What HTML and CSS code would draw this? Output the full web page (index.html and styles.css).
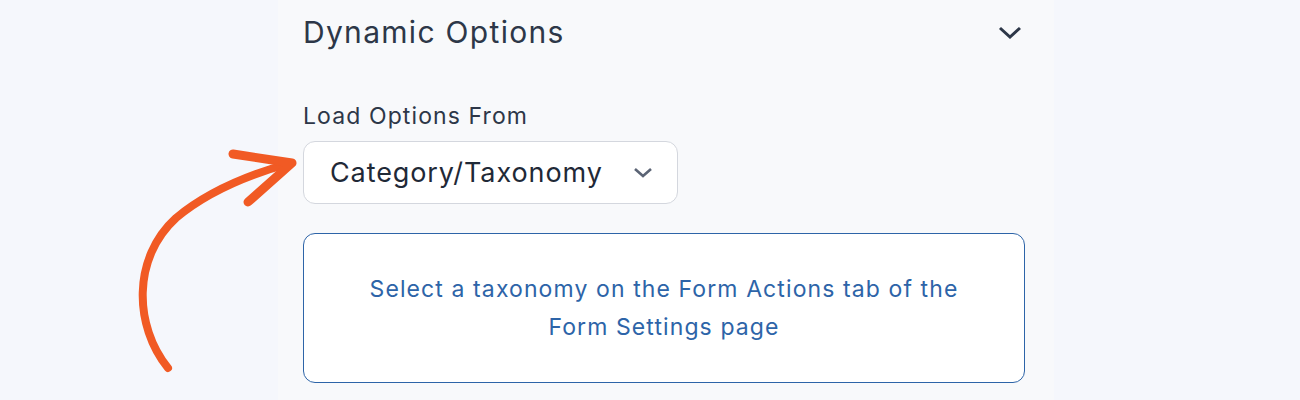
FILE: index.html
```html
<!DOCTYPE html>
<html>
<head>
<meta charset="utf-8">
<link rel="stylesheet" href="styles.css">
</head>
<body>
<div class="page">
  <svg class="arrow" width="320" height="400" viewBox="0 0 320 400">
    <path d="M168,368 C134,326 132,258 176,218 C212,188 258,172 291,163" fill="none" stroke="#f15a24" stroke-width="8" stroke-linecap="round"/>
    <path d="M233,154 L292,163 L248,202" fill="none" stroke="#f15a24" stroke-width="9" stroke-linecap="round" stroke-linejoin="round"/>
  </svg>
  <div class="panel">
    <div class="panel-head">
      <h2 class="title">Dynamic Options</h2>
      <svg class="chev" width="24" height="13" viewBox="0 0 24 13"><path d="M2,2 L12,11 L22,2" fill="none" stroke="#2d3748" stroke-width="3"/></svg>
    </div>
    <div class="field">
      <div class="label">Load Options From</div>
      <div class="select">
        <span>Category/Taxonomy</span>
        <svg width="20" height="11" viewBox="0 0 20 11"><path d="M2,2 L10,9 L18,2" fill="none" stroke="#5b6475" stroke-width="2.6"/></svg>
      </div>
    </div>
    <div class="notice">Select a taxonomy on the Form Actions tab of the<br>Form Settings page</div>
  </div>
</div>
</body>
</html>
```

FILE: styles.css
```css
html, body {
  margin: 0;
  padding: 0;
  background: #f5f7fc;
  font-family: Inter, "Noto Sans", sans-serif;
}
.page {
  position: relative;
  width: 1300px;
  height: 400px;
  overflow: hidden;
}
.arrow {
  position: absolute;
  left: 0;
  top: 0;
  z-index: 2;
}
.panel {
  margin-left: 278px;
  width: 776px;
  height: 400px;
  box-sizing: border-box;
  background: #f8f9fb;
  padding: 0 29px 0 25px;
}
.panel-head {
  display: flex;
  align-items: center;
  justify-content: space-between;
  height: 64px;
}
.title {
  margin: 0;
  font-size: 30px;
  font-weight: 400;
  color: #2d3748;
  letter-spacing: 1.3px;
}
.chev {
  margin-right: 3px;
}
.field {
  margin-top: 34px;
}
.label {
  font-size: 23px;
  color: #2d3748;
  line-height: 36px;
  letter-spacing: 1.1px;
}
.select {
  margin-top: 7px;
  display: inline-flex;
  align-items: center;
  gap: 30px;
  height: 63px;
  padding: 0 24px 0 26px;
  box-sizing: border-box;
  background: #fff;
  border: 1px solid #d4d7de;
  border-radius: 12px;
  font-size: 27px;
  letter-spacing: 0.9px;
  color: #1f2937;
}
.notice {
  margin-top: 29px;
  height: 150px;
  box-sizing: border-box;
  background: #fff;
  border: 1px solid #2d64a8;
  border-radius: 12px;
  display: flex;
  align-items: center;
  justify-content: center;
  text-align: center;
  font-size: 23px;
  line-height: 38px;
  letter-spacing: 1.1px;
  color: #2d64a8;
}
```
